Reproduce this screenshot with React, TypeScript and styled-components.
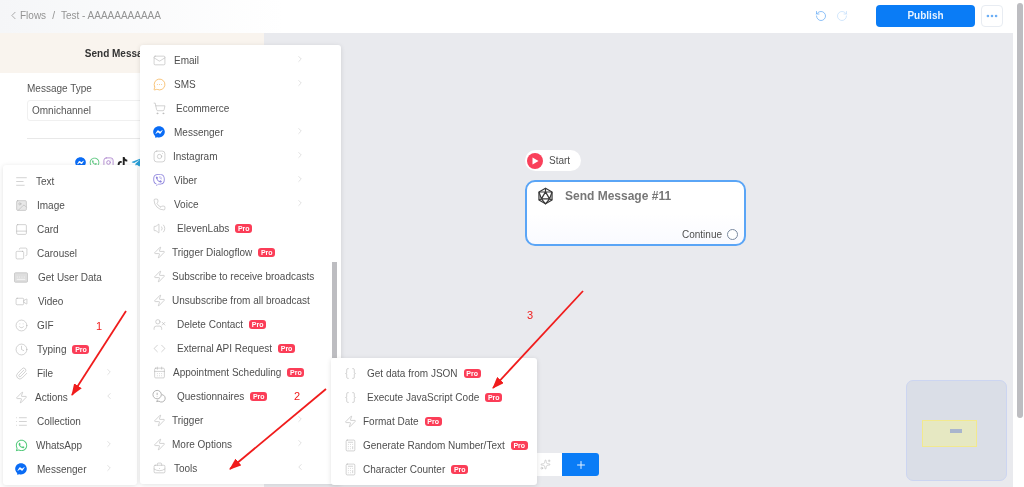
import React from 'react';
import styled, { createGlobalStyle } from 'styled-components';
import {
  AlignLeft, Braces, BriefcaseBusiness, Calculator, CalendarDays, ChevronLeft, ChevronRight, Clock, Code,
  Copy, Image, Instagram, List, Mail, MessageCircleMore, MoreHorizontal, PanelBottom, Paperclip,
  Phone, Plus, RotateCcw, RotateCw, ShoppingCart, Smile, Sparkles, UserX, Video, Volume2, Zap,
} from 'lucide-react';
import { FaFacebookMessenger, FaTelegramPlane, FaTiktok, FaViber, FaWhatsapp } from 'react-icons/fa';

const GlobalStyle = createGlobalStyle`
  html, body {
    margin: 0;
    height: 100%;
    overflow: hidden;
    background: #fff;
    font-family: "Liberation Sans", Arial, sans-serif;
  }
`;

const Page = styled.div`
  display: flex;
  width: 1024px;
  height: 487px;
  overflow: hidden;
  color: #4f4f4f;
  font-size: 10px;
  filter: blur(0.3px);
`;

const Main = styled.div`
  flex: 1;
  display: flex;
  flex-direction: column;
  min-width: 0;
`;

const ScrollTrack = styled.div`
  width: 11px;
  padding: 3px 1px 0 4px;
  box-sizing: border-box;
`;

const ScrollThumb = styled.div`
  height: 415px;
  border-radius: 3px;
  background: #bdbdc1;
`;

const TopBar = styled.header`
  height: 33px;
  flex: none;
  display: flex;
  align-items: center;
  padding: 0 10px 2px 7px;
  box-sizing: border-box;
  background: linear-gradient(90deg, #f5f6f8, #fff 28%);
`;

const BackIcon = styled.span`
  display: flex;
  color: #999;
`;

const Crumb = styled.span<{ $gap?: number }>`
  margin-left: ${(p) => p.$gap ?? 0}px;
  color: #939393;
`;

const ToolIcon = styled.span<{ $faint?: boolean; $gap?: number }>`
  display: flex;
  margin-left: ${(p) => p.$gap ?? 0}px;
  color: ${(p) => (p.$faint ? '#c4dffb' : '#6aaef5')};
`;

const Spacer = styled.div`
  flex: 1;
`;

const PublishButton = styled.button`
  width: 99px;
  height: 22px;
  margin-left: 28px;
  border: 0;
  border-radius: 4px;
  background: #0a7cf6;
  color: #e6f2ff;
  font: bold 10px "Liberation Sans", Arial, sans-serif;
`;

const MoreButton = styled.button`
  width: 22px;
  height: 22px;
  margin-left: 6px;
  padding: 0;
  display: flex;
  align-items: center;
  justify-content: center;
  border: 1px solid #e8ecf2;
  border-radius: 4px;
  background: #fff;
  color: #6aaef5;
`;

const Body = styled.div`
  flex: 1;
  display: flex;
  position: relative;
  min-height: 0;
`;

const Panel = styled.aside`
  width: 264px;
  flex: none;
  background: #fff;
`;

const PanelHeader = styled.div`
  height: 40px;
  padding-right: 6px;
  display: flex;
  align-items: center;
  justify-content: center;
  background: #f9f4ee;
  color: #333;
  font-weight: bold;
`;

const PanelForm = styled.div`
  padding: 9px 27px 0;
`;

const FieldLabel = styled.div`
  height: 13px;
  line-height: 13px;
  color: #555;
`;

const SelectBox = styled.div`
  height: 21px;
  margin-top: 5px;
  padding-left: 4px;
  display: flex;
  align-items: center;
  border: 1px solid #f0f0f0;
  border-radius: 3px;
  color: #555;
  box-sizing: border-box;
`;

const Divider = styled.div`
  height: 1px;
  margin-top: 17px;
  background: #e8e8e8;
`;

const ChannelRow = styled.div`
  display: flex;
  align-items: center;
  gap: 3px;
  margin: 18px 0 0 48px;
`;

const Canvas = styled.main`
  flex: 1;
  position: relative;
  background: #e9eaee;
`;

const StartPill = styled.div`
  position: absolute;
  left: 261px;
  top: 117px;
  width: 56px;
  height: 21px;
  display: flex;
  align-items: center;
  gap: 6px;
  padding-left: 2px;
  box-sizing: border-box;
  border-radius: 11px;
  background: #fff;
`;

const PlayDot = styled.span`
  width: 16px;
  height: 16px;
  display: flex;
  align-items: center;
  justify-content: center;
  border-radius: 50%;
  background: #f9405a;
`;

const FlowNode = styled.div`
  position: absolute;
  left: 261px;
  top: 147px;
  width: 221px;
  height: 66px;
  box-sizing: border-box;
  border: 2px solid #5aa5f6;
  border-radius: 10px;
  background: linear-gradient(#fff 50%, #f9faff);
  display: flex;
  flex-direction: column;
  justify-content: space-between;
`;

const NodeTitleRow = styled.div`
  display: flex;
  align-items: center;
  gap: 11px;
  padding: 5px 0 0 10px;
  color: #777;
  font-size: 12px;
  font-weight: bold;
`;

const NodeFooter = styled.div`
  display: flex;
  align-items: center;
  justify-content: flex-end;
  gap: 5px;
  padding: 0 6px 4px 0;
`;

const Port = styled.span`
  width: 9px;
  height: 9px;
  border: 1px solid #7a8aa0;
  border-radius: 50%;
  background: #fff;
`;

const AddBar = styled.div`
  position: absolute;
  left: 273px;
  top: 420px;
  width: 62px;
  height: 23px;
  display: flex;
  align-items: stretch;
  background: #fff;
  border-radius: 0 3px 3px 0;
`;

const AddHint = styled.span`
  flex: 1;
  display: flex;
  align-items: center;
  justify-content: flex-end;
  padding-right: 11px;
  color: #aaa;
`;

const AddButton = styled.span`
  width: 37px;
  display: flex;
  align-items: center;
  justify-content: center;
  background: #0a7cf6;
  border-radius: 0 3px 3px 0;
  color: #e6f2ff;
`;

const MiniMap = styled.div`
  position: absolute;
  left: 642px;
  top: 347px;
  width: 101px;
  height: 101px;
  display: flex;
  align-items: center;
  box-sizing: border-box;
  padding: 0 29px 0 15px;
  border: 1px solid #ccd5f1;
  border-radius: 7px;
  background: #dadee7;
`;

const MiniViewport = styled.div`
  flex: 1;
  height: 27px;
  margin-top: 6px;
  padding: 8px 0 0 27px;
  box-sizing: border-box;
  border: 1px solid #f2e98e;
  background: #e6e8c2;
`;

const MiniNode = styled.div`
  width: 12px;
  height: 4px;
  background: #a9b5cd;
`;

const Menu = styled.nav<{ $left: number; $top: number; $width: number; $lead: number }>`
  position: absolute;
  left: ${(p) => p.$left}px;
  top: ${(p) => p.$top}px;
  width: ${(p) => p.$width}px;
  padding: ${(p) => p.$lead}px 0 4px;
  box-sizing: border-box;
  border-radius: 3px;
  background: #fff;
  box-shadow: 0 1px 5px rgba(0, 0, 0, 0.12);
`;

const MenuRow = styled.div<{ $inset: number; $end: number }>`
  height: 24px;
  display: flex;
  align-items: center;
  padding: 0 ${(p) => p.$end}px 0 ${(p) => p.$inset}px;
  white-space: nowrap;
`;

const RowIcon = styled.span<{ $color?: string }>`
  width: 14px;
  flex: none;
  display: flex;
  justify-content: center;
  color: ${(p) => p.$color ?? '#adadad'};
`;

const RowLabel = styled.span<{ $gap: number }>`
  margin-left: ${(p) => p.$gap}px;
`;

const ProBadge = styled.span`
  width: 17px;
  height: 9px;
  margin: 1px 0 0 6px;
  display: flex;
  align-items: center;
  justify-content: center;
  border-radius: 3px;
  background: #fb3d57;
  color: #fff;
  font-size: 7px;
  font-weight: bold;
`;

const RowArrow = styled.span`
  margin-left: auto;
  margin-top: -2px;
  display: flex;
  color: #b5b5b5;
`;

const MenuThumb = styled.div`
  position: absolute;
  right: 4px;
  top: 217px;
  width: 5px;
  height: 96px;
  background: #bdbdc1;
`;

const ArrowLayer = styled.svg`
  position: absolute;
  left: 0;
  top: 0;
  width: 1024px;
  height: 487px;
  pointer-events: none;
`;

const StepMark = styled.span<{ $left: number; $top: number }>`
  position: absolute;
  left: ${(p) => p.$left}px;
  top: ${(p) => p.$top}px;
  color: #f01c1c;
  font-size: 11px;
`;

interface Item {
  icon: React.ReactNode;
  label: string;
  at: number;
  color?: string;
  pro?: boolean;
  arrow?: 'in' | 'out';
}

const s = { size: 13, strokeWidth: 1 };

const Bubbles = () => (
  <svg width="15" height="14" viewBox="0 0 15 14" fill="none" stroke="currentColor" strokeWidth="1">
    <circle cx="5.5" cy="5.5" r="4.5" />
    <path d="M5.5 3.5v2.5M5.5 7.5v.5" />
    <path d="M10.5 5.5a4 4 0 1 1-3 7l-2.5.5 1-2" />
  </svg>
);

const KeyPad = () => (
  <svg width="15" height="11" viewBox="0 0 15 11">
    <rect x="0.5" y="0.5" width="14" height="10" rx="1" fill="#dedede" stroke="#c8c8c8" />
    <path d="M3 7.5h9M3.5 4.5v1M6 4.5v1M8.5 4.5v1M11 4.5v1" stroke="#f5f5f5" fill="none" />
  </svg>
);

const Icosahedron = () => (
  <svg width="17" height="18" viewBox="0 0 20 22" fill="none" stroke="#3a3a3a" strokeWidth="1.5" strokeLinejoin="round">
    <path d="M10 1.5l8 4.6v9.8l-8 4.6-8-4.6V6.1z" />
    <path d="M10 6l5 8.5H5zM10 1.5V6M2 6.1L10 6l8 .1M2 6.1l3 8.4M18 6.1l-3 8.4M2 15.9l3-1.4M18 15.9l-3-1.4M5 14.5l5 6 5-6" />
  </svg>
);

const actionMenu: Item[] = [
  { icon: <AlignLeft {...s} />, label: 'Text', at: 8 },
  { icon: <Image {...s} fill="#e8e8e8" />, label: 'Image', at: 9 },
  { icon: <PanelBottom {...s} />, label: 'Card', at: 9 },
  { icon: <Copy {...s} style={{ transform: 'scaleX(-1)' }} />, label: 'Carousel', at: 9 },
  { icon: <KeyPad />, label: 'Get User Data', at: 10 },
  { icon: <Video {...s} />, label: 'Video', at: 10 },
  { icon: <Smile {...s} />, label: 'GIF', at: 9 },
  { icon: <Clock {...s} />, label: 'Typing', at: 9, pro: true },
  { icon: <Paperclip {...s} />, label: 'File', at: 9, arrow: 'out' },
  { icon: <Zap {...s} />, label: 'Actions', at: 7, arrow: 'in' },
  { icon: <List {...s} />, label: 'Collection', at: 9 },
  { icon: <FaWhatsapp size={13} />, label: 'WhatsApp', at: 8, color: '#4fc878', arrow: 'out' },
  { icon: <FaFacebookMessenger size={12} />, label: 'Messenger', at: 9, color: '#0a6cf5', arrow: 'out' },
];

const toolGroups: Item[] = [
  { icon: <Mail {...s} />, label: 'Email', at: 8, arrow: 'out' },
  { icon: <MessageCircleMore {...s} strokeWidth={1.5} />, label: 'SMS', at: 8, color: '#f6b85f', arrow: 'out' },
  { icon: <ShoppingCart {...s} />, label: 'Ecommerce', at: 10 },
  { icon: <FaFacebookMessenger size={12} />, label: 'Messenger', at: 8, color: '#0a6cf5', arrow: 'out' },
  { icon: <Instagram {...s} />, label: 'Instagram', at: 7, arrow: 'out' },
  { icon: <FaViber size={12} />, label: 'Viber', at: 8, color: '#8d83dd', arrow: 'out' },
  { icon: <Phone {...s} />, label: 'Voice', at: 8, arrow: 'out' },
  { icon: <Volume2 {...s} />, label: 'ElevenLabs', at: 11, pro: true },
  { icon: <Zap {...s} />, label: 'Trigger Dialogflow', at: 6, pro: true },
  { icon: <Zap {...s} />, label: 'Subscribe to receive broadcasts', at: 6 },
  { icon: <Zap {...s} />, label: 'Unsubscribe from all broadcast', at: 6 },
  { icon: <UserX {...s} />, label: 'Delete Contact', at: 11, pro: true },
  { icon: <Code {...s} />, label: 'External API Request', at: 11, pro: true },
  { icon: <CalendarDays {...s} />, label: 'Appointment Scheduling', at: 7, pro: true },
  { icon: <Bubbles />, label: 'Questionnaires', at: 11, pro: true },
  { icon: <Zap {...s} />, label: 'Trigger', at: 6, arrow: 'out' },
  { icon: <Zap {...s} />, label: 'More Options', at: 6, arrow: 'out' },
  { icon: <BriefcaseBusiness {...s} />, label: 'Tools', at: 8, arrow: 'in' },
];

const toolItems: Item[] = [
  { icon: <Braces {...s} />, label: 'Get data from JSON', at: 10, pro: true },
  { icon: <Braces {...s} />, label: 'Execute JavaScript Code', at: 10, pro: true },
  { icon: <Zap {...s} />, label: 'Format Date', at: 6, pro: true },
  { icon: <Calculator {...s} />, label: 'Generate Random Number/Text', at: 6, pro: true },
  { icon: <Calculator {...s} />, label: 'Character Counter', at: 6, pro: true },
];

const MenuItems = ({ items, inset, end }: { items: Item[]; inset: number; end: number }) => (
  <>
    {items.map((item) => (
      <MenuRow key={item.label} $inset={inset} $end={end}>
        <RowIcon $color={item.color}>{item.icon}</RowIcon>
        <RowLabel $gap={item.at}>{item.label}</RowLabel>
        {item.pro && <ProBadge>Pro</ProBadge>}
        {item.arrow && (
          <RowArrow>
            {item.arrow === 'out' ? <ChevronRight size={10} strokeWidth={1} /> : <ChevronLeft size={10} strokeWidth={1} />}
          </RowArrow>
        )}
      </MenuRow>
    ))}
  </>
);

const App = () => (
  <Page>
    <GlobalStyle />
    <Main>
      <TopBar>
        <BackIcon><ChevronLeft size={13} strokeWidth={1.5} /></BackIcon>
        <Crumb>Flows</Crumb>
        <Crumb $gap={6}>/</Crumb>
        <Crumb $gap={6}>Test - AAAAAAAAAAA</Crumb>
        <Spacer />
        <ToolIcon><RotateCcw size={12} strokeWidth={1.5} /></ToolIcon>
        <ToolIcon $faint $gap={9}><RotateCw size={12} strokeWidth={1.5} /></ToolIcon>
        <PublishButton>Publish</PublishButton>
        <MoreButton><MoreHorizontal size={14} strokeWidth={2.5} /></MoreButton>
      </TopBar>
      <Body>
        <Panel>
          <PanelHeader>Send Message #11</PanelHeader>
          <PanelForm>
            <FieldLabel>Message Type</FieldLabel>
            <SelectBox>Omnichannel</SelectBox>
            <Divider />
            <ChannelRow>
              <FaFacebookMessenger size={11} color="#0a6cf5" />
              <FaWhatsapp size={11} color="#55c57a" />
              <Instagram size={11} color="#b08ad0" />
              <FaTiktok size={11} color="#222" />
              <FaTelegramPlane size={11} color="#2a9fd6" />
            </ChannelRow>
          </PanelForm>
        </Panel>
        <Canvas>
          <StartPill>
            <PlayDot>
              <svg width="8" height="8" viewBox="0 0 8 8"><path d="M1.5 0.5l6 3.5-6 3.5z" fill="#fff" /></svg>
            </PlayDot>
            Start
          </StartPill>
          <FlowNode>
            <NodeTitleRow>
              <Icosahedron />
              Send Message #11
            </NodeTitleRow>
            <NodeFooter>
              Continue
              <Port />
            </NodeFooter>
          </FlowNode>
          <AddBar>
            <AddHint><Sparkles size={11} strokeWidth={1} /></AddHint>
            <AddButton><Plus size={12} strokeWidth={2} /></AddButton>
          </AddBar>
          <MiniMap>
            <MiniViewport>
              <MiniNode />
            </MiniViewport>
          </MiniMap>
        </Canvas>
        <Menu $left={3} $top={132} $width={134} $lead={4}>
          <MenuItems items={actionMenu} inset={11} end={23} />
        </Menu>
        <Menu $left={140} $top={12} $width={201} $lead={3}>
          <MenuItems items={toolGroups} inset={12} end={36} />
          <MenuThumb />
        </Menu>
        <Menu $left={331} $top={325} $width={206} $lead={3}>
          <MenuItems items={toolItems} inset={12} end={8} />
        </Menu>
        <StepMark $left={96} $top={287}>1</StepMark>
        <StepMark $left={294} $top={357}>2</StepMark>
        <StepMark $left={527} $top={276}>3</StepMark>
      </Body>
    </Main>
    <ScrollTrack>
      <ScrollThumb />
    </ScrollTrack>
    <ArrowLayer viewBox="0 0 1024 487">
      <defs>
        <marker id="head" markerWidth="12" markerHeight="9" refX="11" refY="4.5" orient="auto" markerUnits="userSpaceOnUse">
          <path d="M0 0L12 4.5L0 9z" fill="#f01c1c" />
        </marker>
      </defs>
      <g stroke="#f01c1c" strokeWidth="1.8">
        <line x1="126" y1="311" x2="72" y2="395" markerEnd="url(#head)" />
        <line x1="326" y1="389" x2="230" y2="469" markerEnd="url(#head)" />
        <line x1="583" y1="291" x2="493" y2="388" markerEnd="url(#head)" />
      </g>
    </ArrowLayer>
  </Page>
);

export default App;
